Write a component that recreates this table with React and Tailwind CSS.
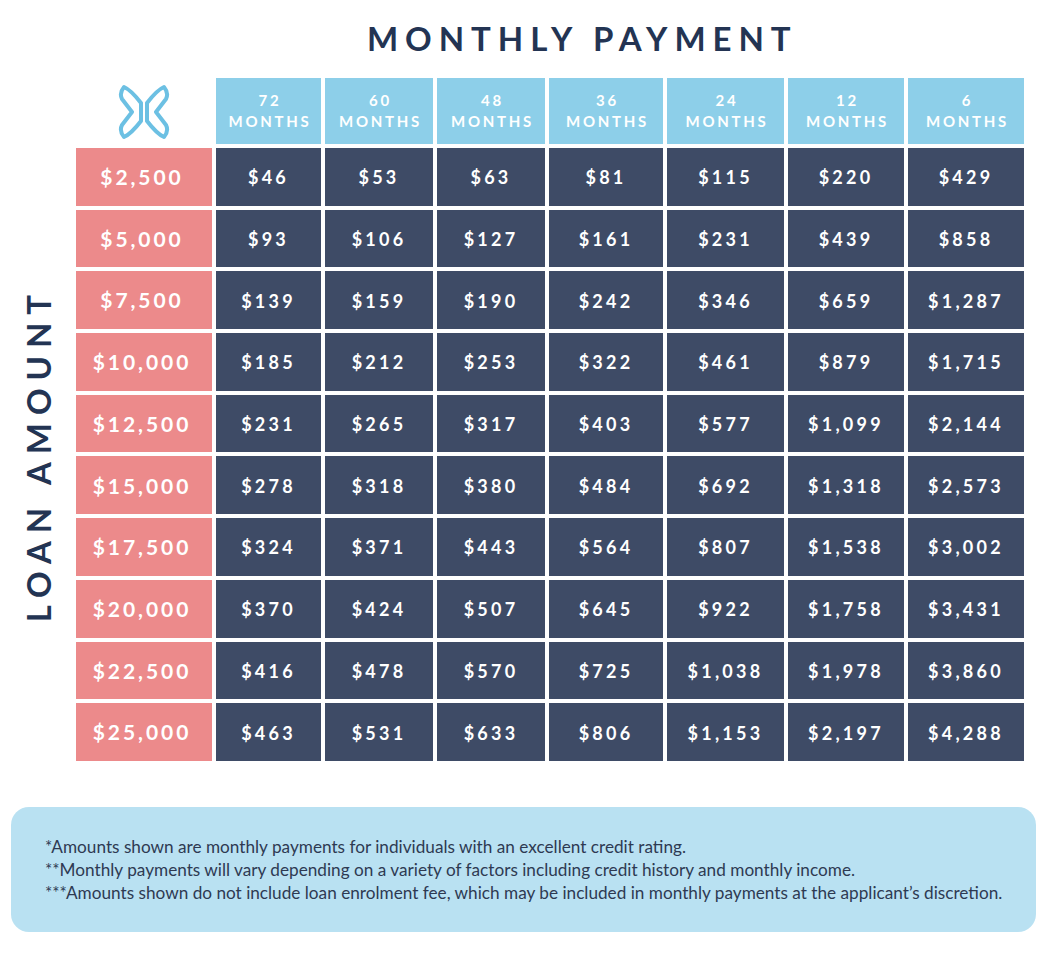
import React from "react";

const months = ["72", "60", "48", "36", "24", "12", "6"];

const rows = [
  ["$2,500", "$46", "$53", "$63", "$81", "$115", "$220", "$429"],
  ["$5,000", "$93", "$106", "$127", "$161", "$231", "$439", "$858"],
  ["$7,500", "$139", "$159", "$190", "$242", "$346", "$659", "$1,287"],
  ["$10,000", "$185", "$212", "$253", "$322", "$461", "$879", "$1,715"],
  ["$12,500", "$231", "$265", "$317", "$403", "$577", "$1,099", "$2,144"],
  ["$15,000", "$278", "$318", "$380", "$484", "$692", "$1,318", "$2,573"],
  ["$17,500", "$324", "$371", "$443", "$564", "$807", "$1,538", "$3,002"],
  ["$20,000", "$370", "$424", "$507", "$645", "$922", "$1,758", "$3,431"],
  ["$22,500", "$416", "$478", "$570", "$725", "$1,038", "$1,978", "$3,860"],
  ["$25,000", "$463", "$531", "$633", "$806", "$1,153", "$2,197", "$4,288"],
];

const notes = [
  "*Amounts shown are monthly payments for individuals with an excellent credit rating.",
  "**Monthly payments will vary depending on a variety of factors including credit history and monthly income.",
  "***Amounts shown do not include loan enrolment fee, which may be included in monthly payments at the applicant\u2019s discretion.",
];

// logo: two mirrored outlined chevrons with leaf tips
const Logo = () => (
  <svg width="54" height="56" viewBox="0 0 54 56" fill="none" stroke="#6cc0e3" strokeWidth="4" strokeLinejoin="round">
    <path d="M7 3 Q14 6 24 19 L24 37 Q14 50 7 53 Q2 47 5 41 L15 28 L5 15 Q2 9 7 3 Z" />
    <path d="M47 3 Q40 6 30 19 L30 37 Q40 50 47 53 Q52 47 49 41 L39 28 L49 15 Q52 9 47 3 Z" />
  </svg>
);

export default function App() {
  return (
    <div className="w-[1046px] min-h-[968px] bg-white font-['Lato','Liberation_Sans',sans-serif]">
      <h1 className="pt-[22px] pl-[367px] text-[33px] leading-none font-bold tracking-[0.21em] text-[#233453]">
        MONTHLY PAYMENT
      </h1>

      <div className="mt-[23px] grid grid-cols-[72px_136px_105px_108px_108px_114px_117px_116px_116px] grid-rows-[66px_repeat(10,57.7px)] gap-1">
        <div />
        <div className="flex items-center justify-center pt-[2px]">
          <Logo />
        </div>
        {months.map((m) => (
          <div
            key={m}
            className="flex flex-col items-center justify-center bg-[#8dcfe9] pl-[3px] text-[15px] leading-[21px] font-bold tracking-[0.18em] text-white"
          >
            <span>{m}</span>
            <span>MONTHS</span>
          </div>
        ))}

        <div className="row-span-10 flex items-center justify-center pl-1">
          <span className="rotate-180 [writing-mode:vertical-rl] text-[33px] leading-none font-bold tracking-[0.24em] text-[#233453]">
            LOAN AMOUNT
          </span>
        </div>

        {rows.map((r) => (
          <React.Fragment key={r[0]}>
            <div className="flex items-center justify-center bg-[#ec8a8b] pr-1 text-[21px] font-bold tracking-[0.14em] text-white">
              {r[0]}
            </div>
            {r.slice(1).map((v, i) => (
              <div
                key={i}
                className="flex items-center justify-center bg-[#3e4b66] pt-[2px] text-[18px] font-bold tracking-[0.18em] text-white"
              >
                {v}
              </div>
            ))}
          </React.Fragment>
        ))}
      </div>

      <div className="mx-[11px] mt-[46px] flex h-[125px] w-[1025px] flex-col justify-center rounded-[18px] bg-[#b9e1f2] pl-[34px] text-[17.2px] leading-[23px] text-[#2e3a52]">
        {notes.map((n) => (
          <p key={n}>{n}</p>
        ))}
      </div>
    </div>
  );
}
